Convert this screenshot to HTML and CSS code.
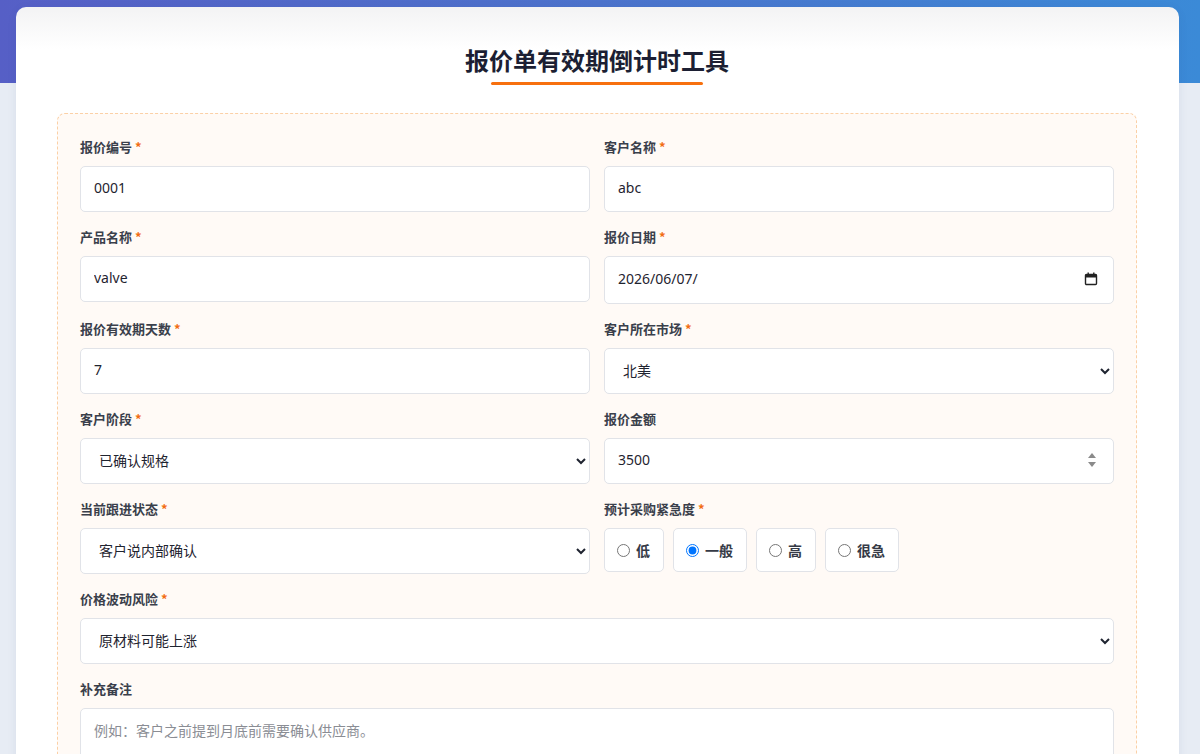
FILE: index.html
```html
<!DOCTYPE html>
<html lang="zh-CN">
<head>
<meta charset="utf-8">
<title>报价单有效期倒计时工具</title>
<link rel="stylesheet" href="styles.css">
</head>
<body>
<div class="card">
  <h1 class="title">报价单有效期倒计时工具</h1>
  <div class="form-box">
    <div class="grid">
      <div class="field">
        <label class="lbl">报价编号 <span class="req">*</span></label>
        <input class="ctl" type="text" value="0001">
      </div>
      <div class="field">
        <label class="lbl">客户名称 <span class="req">*</span></label>
        <input class="ctl" type="text" value="abc">
      </div>
      <div class="field">
        <label class="lbl">产品名称 <span class="req">*</span></label>
        <input class="ctl" type="text" value="valve">
      </div>
      <div class="field">
        <label class="lbl">报价日期 <span class="req">*</span></label>
        <div class="wrap">
          <input class="ctl date" type="text" value="2026/06/07/">
          <svg class="cal" width="14" height="14" viewBox="0 0 14 14"><rect x="1.5" y="2.5" width="11" height="10" rx="1" fill="none" stroke="#222" stroke-width="1.4"/><rect x="1.5" y="2.5" width="11" height="3" fill="#222"/><rect x="3.5" y="0.5" width="1.4" height="3" fill="#222"/><rect x="9.1" y="0.5" width="1.4" height="3" fill="#222"/></svg>
        </div>
      </div>
      <div class="field">
        <label class="lbl">报价有效期天数 <span class="req">*</span></label>
        <input class="ctl" type="text" value="7">
      </div>
      <div class="field">
        <label class="lbl">客户所在市场 <span class="req">*</span></label>
        <select class="ctl sel"><option>北美</option></select>
      </div>
      <div class="field">
        <label class="lbl">客户阶段 <span class="req">*</span></label>
        <select class="ctl sel"><option>已确认规格</option></select>
      </div>
      <div class="field">
        <label class="lbl">报价金额</label>
        <div class="wrap">
          <input class="ctl" type="text" value="3500">
          <svg class="spin" width="12" height="18" viewBox="0 0 12 18"><path d="M6 2 L10 7 L2 7 Z" fill="#8a8a8a"/><path d="M2 11 L10 11 L6 16 Z" fill="#8a8a8a"/></svg>
        </div>
      </div>
      <div class="field">
        <label class="lbl">当前跟进状态 <span class="req">*</span></label>
        <select class="ctl sel"><option>客户说内部确认</option></select>
      </div>
      <div class="field">
        <label class="lbl">预计采购紧急度 <span class="req">*</span></label>
        <div class="radios">
          <label class="radio"><input type="radio" name="u"><span>低</span></label>
          <label class="radio"><input type="radio" name="u" checked><span>一般</span></label>
          <label class="radio"><input type="radio" name="u"><span>高</span></label>
          <label class="radio"><input type="radio" name="u"><span>很急</span></label>
        </div>
      </div>
      <div class="field full">
        <label class="lbl">价格波动风险 <span class="req">*</span></label>
        <select class="ctl sel"><option>原材料可能上涨</option></select>
      </div>
      <div class="field full">
        <label class="lbl">补充备注</label>
        <textarea class="ctl area" placeholder="例如：客户之前提到月底前需要确认供应商。"></textarea>
      </div>
    </div>
  </div>
</div>
</body>
</html>
```
FILE: styles.css
```css
* { box-sizing: border-box; }
html, body { margin: 0; padding: 0; }
body {
  font-family: "Noto Sans", "Noto Sans CJK SC", sans-serif;
  background-color: #e7ecf4;
  background-image: linear-gradient(90deg, #565fc6 0%, #4c73cc 50%, #3b8ad7 100%);
  background-size: 100% 83px;
  background-repeat: no-repeat;
  padding-top: 7px;
  min-height: 754px;
  color: #1f2937;
}
.card {
  margin: 0 21px 0 16px;
  background: linear-gradient(180deg, #f3f3f4 0px, #ffffff 42px);
  border-radius: 10px 10px 0 0;
  padding: 38px 42px 40px 41px;
  box-shadow: 0 2px 10px rgba(40, 60, 110, 0.08);
}
.title {
  position: relative;
  margin: 0 auto 38px;
  width: max-content;
  font-size: 24px;
  line-height: 30px;
  font-weight: 700;
  color: #1c1f33;
  font-family: "Noto Sans CJK SC", sans-serif;
}
.title::after {
  content: "";
  position: absolute;
  left: 10%;
  width: 80%;
  bottom: -10px;
  height: 3px;
  background: #f7700e;
  border-radius: 2px;
}
.form-box {
  border: 1px dashed #fbd0a6;
  border-radius: 8px;
  background: #fffaf6;
  padding: 23px 22px 40px;
}
.grid {
  display: grid;
  grid-template-columns: 1fr 1fr;
  column-gap: 14px;
  row-gap: 15px;
  align-items: start;
}
.full { grid-column: 1 / span 2; }
.lbl {
  display: block;
  font-family: "Noto Sans CJK SC", sans-serif;
  font-size: 13px;
  line-height: 20px;
  font-weight: 700;
  color: #3a3f4b;
  margin-bottom: 9px;
}
.req { color: #f26d12; }
.ctl {
  display: block;
  width: 100%;
  height: 46px;
  border: 1px solid #e1e3e8;
  border-radius: 5px;
  background: #fff;
  padding: 0 13px 4px;
  font-family: "Noto Sans", "Noto Sans CJK SC", sans-serif;
  font-size: 14px;
  color: #1f2430;
  outline: none;
}
.date { height: 48px; }
.sel { padding: 0 14px 2px; }
.wrap { position: relative; }
.cal { position: absolute; right: 16px; top: 16px; }
.spin { position: absolute; right: 16px; top: 13px; }
.radios { display: flex; gap: 9px; }
.radio {
  display: flex;
  align-items: center;
  gap: 6px;
  height: 44px;
  padding: 0 13px 0 12px;
  background: #fff;
  border: 1px solid #e1e3e8;
  border-radius: 5px;
  font-family: "Noto Sans CJK SC", sans-serif;
  font-size: 14px;
  font-weight: 700;
  color: #353a46;
}
.radio input { margin: 0; width: 13px; height: 13px; }
.area {
  height: 100px;
  padding: 10px 13px;
  line-height: 22px;
  resize: vertical;
  font-family: "Noto Sans CJK SC", sans-serif;
}
.area::placeholder { color: #8a8d94; }
```
